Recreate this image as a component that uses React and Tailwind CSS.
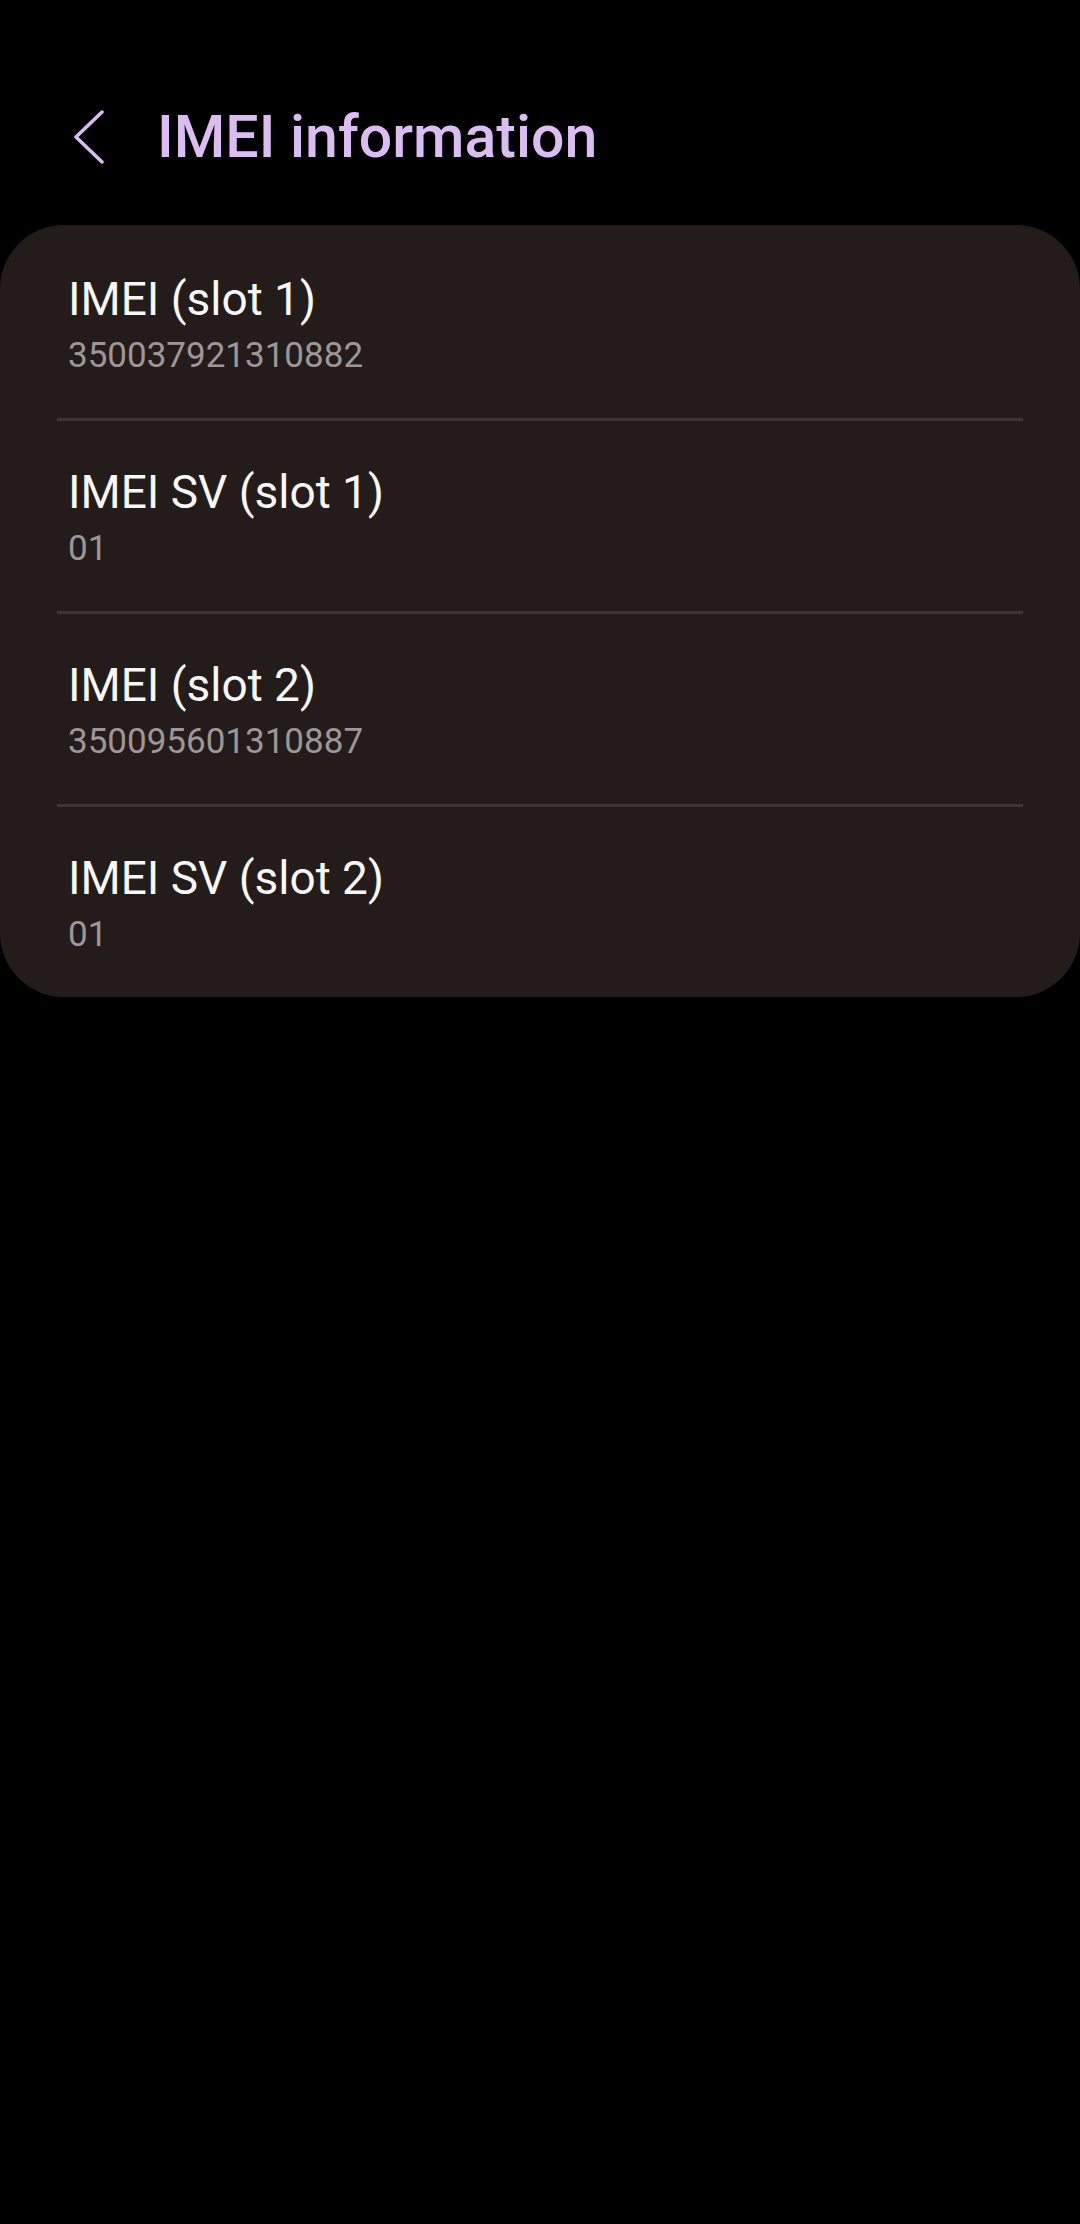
import React from "react";

const rows = [
  { t: "IMEI (slot 1)", v: "350037921310882" },
  { t: "IMEI SV (slot 1)", v: "01" },
  { t: "IMEI (slot 2)", v: "350095601310887" },
  { t: "IMEI SV (slot 2)", v: "01" },
];

export default function App() {
  return (
    <div
      className="w-[1080px] h-[2224px] bg-black"
      style={{ fontFamily: "Roboto, 'Noto Sans', sans-serif" }}
    >
      <div className="flex items-center pt-[102px] pl-[73px] h-[172px]">
        <svg width="32" height="54" viewBox="0 0 32 54" className="shrink-0">
          <polyline
            points="29,2 3,27 29,52"
            fill="none"
            stroke="#dcbdf2"
            strokeWidth="3.5"
            strokeLinecap="round"
            strokeLinejoin="round"
          />
        </svg>
        <div className="ml-[52px] text-[59px] leading-[70px] font-medium text-[#dcbdf2]">
          IMEI information
        </div>
      </div>
      <div className="mt-[53px] bg-[#231c1b] rounded-[64px] pt-[3px]">
        {rows.map((r, i) => (
          <div key={i}>
            {i > 0 && <div className="mx-[57px] h-[3px] bg-[#3b3636]" />}
            <div className="h-[190px] pl-[68px] pt-[44px]">
              <div className="text-[46px] leading-[54px] text-[#f7f7f7]">{r.t}</div>
              <div className="mt-[8px] text-[35px] leading-[44px] text-[#9d9797]">{r.v}</div>
            </div>
          </div>
        ))}
      </div>
    </div>
  );
}
